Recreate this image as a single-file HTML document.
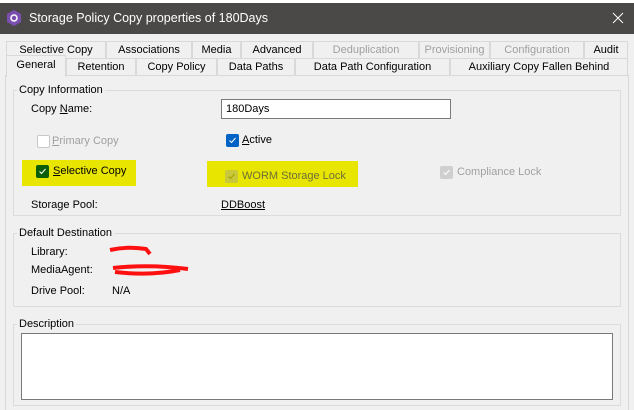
<!DOCTYPE html>
<html><head><meta charset="utf-8"><style>
*{margin:0;padding:0;box-sizing:border-box}
body{width:634px;height:410px;background:#f0f0f0;font-family:"Liberation Sans",sans-serif;font-size:11px;color:#000;position:relative;overflow:hidden}
.a{position:absolute;white-space:nowrap}
.tab{position:absolute;border:1px solid #d9d9d9;border-bottom:none;background:#f0f0f0;text-align:center;line-height:16px;white-space:nowrap;overflow:hidden}
.dis{color:#a0a0a0}
.grp{position:absolute;border:1px solid #dcdcdc}
.lg{position:absolute;background:#f0f0f0;padding:0 2px;top:-8px;left:3px;line-height:14px;white-space:nowrap}
.cb{position:absolute;width:13px;height:13px;border-radius:2px}
.cb svg{position:absolute;left:1px;top:1px}
</style></head><body>
<div class="a" style="left:0;top:0;width:634px;height:3px;background:#fff"></div>
<div class="a" style="left:0;top:3px;width:634px;height:31px;background:#4a4948"></div>
<svg class="a" style="left:7px;top:10px" width="14" height="16" viewBox="0 0 14 16"><polygon points="7,0 14,4 14,12 7,16 0,12 0,4" fill="#7a4fb0"/><circle cx="7" cy="8" r="3" fill="none" stroke="#fff" stroke-width="1.5"/></svg>
<div class="a" style="left:29px;top:11px;color:#fff;font-size:12.5px">Storage Policy Copy properties of 180Days</div>
<svg class="a" style="left:612px;top:12px" width="12" height="12"><path d="M1 1 L11 11 M11 1 L1 11" stroke="#fff" stroke-width="1"/></svg>

<div class="tab" style="left:6px;top:41px;width:100px;height:17px">Selective Copy</div>
<div class="tab" style="left:106px;top:41px;width:86px;height:17px">Associations</div>
<div class="tab" style="left:192px;top:41px;width:49px;height:17px">Media</div>
<div class="tab" style="left:241px;top:41px;width:72px;height:17px">Advanced</div>
<div class="tab dis" style="left:313px;top:41px;width:106px;height:17px">Deduplication</div>
<div class="tab dis" style="left:419px;top:41px;width:71px;height:17px">Provisioning</div>
<div class="tab dis" style="left:490px;top:41px;width:94px;height:17px">Configuration</div>
<div class="tab" style="left:584px;top:41px;width:44px;height:17px">Audit</div>

<div class="tab" style="left:66px;top:58px;width:70px;height:17px">Retention</div>
<div class="tab" style="left:136px;top:58px;width:81px;height:17px">Copy Policy</div>
<div class="tab" style="left:217px;top:58px;width:78px;height:17px">Data Paths</div>
<div class="tab" style="left:295px;top:58px;width:155px;height:17px">Data Path Configuration</div>
<div class="tab" style="left:450px;top:58px;width:178px;height:17px">Auxiliary Copy Fallen Behind</div>
<div class="a" style="left:5px;top:75px;width:624px;height:335px;border:1px solid #d9d9d9;border-bottom:none"></div>
<div class="tab" style="left:6px;top:55px;width:60px;height:22px;line-height:18px;z-index:2">General</div>

<div class="grp" style="left:13px;top:90px;width:608px;height:126px"><div class="lg">Copy Information</div></div>
<div class="a" style="left:31px;top:103px">Copy <u>N</u>ame:</div>
<div class="a" style="left:221px;top:99px;width:230px;height:20px;background:#fff;border:1px solid #7a7a7a;padding:3px 4px">180Days</div>

<div class="cb" style="left:37px;top:135px;background:#fff;border:1px solid #c8c8c8"></div>
<div class="a dis" style="left:52px;top:135px"><u>P</u>rimary Copy</div>
<div class="cb" style="left:226px;top:134px;background:#0063c5"><svg width="11" height="11"><path d="M2.5 5.5 L4.5 7.5 L8.5 3" stroke="#fff" fill="none" stroke-width="1"/></svg></div>
<div class="a" style="left:242px;top:134px"><u>A</u>ctive</div>

<div class="a" style="left:22px;top:160px;width:114px;height:26px;background:#e8e600"></div>
<div class="cb" style="left:36px;top:165px;background:#0b5f0b"><svg width="11" height="11"><path d="M2.5 5.5 L4.5 7.5 L8.5 3" stroke="#fff" fill="none" stroke-width="1"/></svg></div>
<div class="a" style="left:53px;top:165px"><u>S</u>elective Copy</div>
<div class="a" style="left:207px;top:161px;width:151px;height:26px;background:#e8e600"></div>
<div class="cb" style="left:225px;top:170px;background:#c8c83a"><svg width="11" height="11"><path d="M2.5 5.5 L4.5 7.5 L8.5 3" stroke="#a0a000" fill="none" stroke-width="1"/></svg></div>
<div class="a" style="left:242px;top:170px;color:#6e6e3a">WORM Storage Lock</div>
<div class="cb" style="left:440px;top:166px;background:#cfcfcf"><svg width="11" height="11"><path d="M2.5 5.5 L4.5 7.5 L8.5 3" stroke="#fff" fill="none" stroke-width="1"/></svg></div>
<div class="a dis" style="left:457px;top:166px">Compliance Lock</div>

<div class="a" style="left:31px;top:199px">Storage Pool:</div>
<div class="a" style="left:221px;top:199px;text-decoration:underline">DDBoost</div>

<div class="grp" style="left:13px;top:233px;width:608px;height:74px"><div class="lg">Default Destination</div></div>
<div class="a" style="left:31px;top:246px">Library:</div>
<svg class="a" style="left:108px;top:244px" width="45" height="14"><path d="M2 6 Q20 2 38 5 L42 10" stroke="#ff1010" stroke-width="4" fill="none"/></svg>
<div class="a" style="left:31px;top:264px">MediaAgent:</div>
<svg class="a" style="left:110px;top:262px" width="82" height="16"><path d="M3 6 Q40 2 78 7 M5 10 Q40 14 70 8" stroke="#ff1010" stroke-width="4" fill="none"/></svg>
<div class="a" style="left:31px;top:285px">Drive Pool:</div>
<div class="a" style="left:112px;top:285px">N/A</div>

<div class="grp" style="left:13px;top:324px;width:608px;height:82px"><div class="lg">Description</div></div>
<div class="a" style="left:21px;top:341px;width:592px;height:79px;background:#fff;border:1px solid #7a7a7a;top:333px;height:67px"></div>
</body></html>
